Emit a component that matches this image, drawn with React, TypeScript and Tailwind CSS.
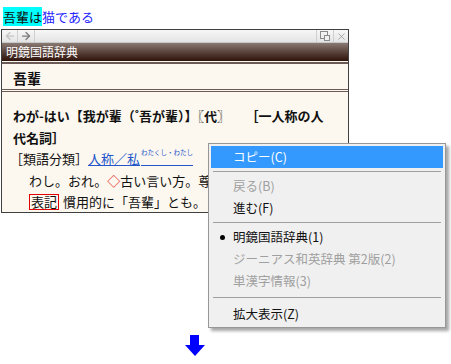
import { ArrowLeft, ArrowRight, X } from "lucide-react";

const font = { fontFamily: '"Noto Sans CJK JP", "Noto Sans", sans-serif' };

const MenuItem = ({ label, active, disabled, bullet }: { label: string; active?: boolean; disabled?: boolean; bullet?: boolean }) => (
    <div
        className={`relative h-[22px] mx-[2px] flex items-center pl-[22px] text-[12.5px] leading-none ${
            active ? "bg-[#3399ff] text-white" : disabled ? "text-[#a0a0a0]" : "text-[#111]"
        }`}
    >
        {bullet && <span className="absolute left-[9px] top-[9px] w-[5px] h-[5px] rounded-full bg-black"></span>}
        {label}
    </div>
);

const Sep = ({ last }: { last?: boolean }) => (
    <div className={`h-px bg-[#a0a0a0] mx-[4px] ${last ? "my-[5px]" : "my-[3px]"}`}></div>
);

const App = () => {
    return (
        <div className="relative w-[451px] h-[364px] bg-white overflow-hidden" style={font}>
            <div className="h-[29px] pt-[8px] pl-[3px] text-[13px] leading-[18px]">
                <span className="bg-[#00ffff] text-[#111]">吾輩は</span>
                <span className="text-[#2222ff]">猫である</span>
            </div>

            {/* popup window */}
            <div className="ml-px w-[348px] h-[184px] border border-[#404040] bg-[#fdf8ef] flex flex-col">
                <div className="h-[15px] flex items-stretch bg-gradient-to-b from-[#f7f7f7] to-[#e4e4e4] border-b border-[#c8c8c8]">
                    <div className="w-[16px] flex items-center justify-center border-r border-[#cfcfcf]">
                        <ArrowLeft size={12} strokeWidth={2.5} className="text-[#c4c4c4]" />
                    </div>
                    <div className="w-[17px] flex items-center justify-center border-r border-[#cfcfcf]">
                        <ArrowRight size={12} strokeWidth={2.5} className="text-[#7a7a7a]" />
                    </div>
                    <div className="flex-1"></div>
                    <div className="w-[17px] flex items-center justify-center border-l border-[#cfcfcf]">
                        <svg width="10" height="10" viewBox="0 0 10 10">
                            <rect x="0.5" y="0.5" width="7" height="7" fill="none" stroke="#8a8a8a" />
                            <rect x="4.5" y="4.5" width="5" height="5" fill="#f0f0f0" stroke="#8a8a8a" />
                        </svg>
                    </div>
                    <div className="w-[15px] flex items-center justify-center border-l border-[#cfcfcf]">
                        <X size={11} strokeWidth={1.5} className="text-[#8a8a8a]" />
                    </div>
                </div>
                <div className="h-[19px] flex items-center pl-[4px] text-[12px] text-white bg-gradient-to-b from-[#8a7a74] via-[#5a443c] to-[#2e130a]">
                    明鏡国語辞典
                </div>
                <div className="h-[2px] bg-[#fdf8ef]"></div>
                <div className="h-[2px] bg-[#6b5a55]"></div>
                <div className="h-[26px] flex items-center pt-[4px] pl-[11px] text-[14px] font-bold text-[#111]">吾輩</div>
                <div className="h-[4px] border-y border-[#6b5a55]"></div>
                <div className="flex-1 pl-[11px] pt-[12px] text-[13px] text-[#111]">
                    <div className="h-[23px] leading-[23px] font-bold">
                        わが-はい【我が輩（˚吾が輩）】〖代〗<span className="ml-[22px]">［一人称の人</span>
                    </div>
                    <div className="h-[21px] leading-[21px] font-bold">代名詞］</div>
                    <div className="h-[22px] leading-[22px] -ml-[3px]">
                        ［類語分類］
                        <span className="text-[#2255cc] underline">
                            人称／私<sup className="text-[6.5px] ml-px align-[6px]">わたくし・わたし</sup>
                        </span>
                    </div>
                    <div className="h-[22px] leading-[22px] pl-[16px]">
                        わし。おれ。<span className="text-[#e02020]">◇</span>古い言い方。尊
                    </div>
                    <div className="h-[20px] pl-[16px] flex items-center">
                        <span className="border border-[#e00000] px-px leading-[14px]">表記</span>
                        <span className="ml-[4px]">慣用的に「吾輩」とも。</span>
                    </div>
                </div>
            </div>

            <div className="mt-[122px] ml-[185px] flex flex-col items-center w-[19px]">
                <div className="w-[9px] h-[10px] bg-[#0000ff]"></div>
                <div className="w-0 h-0 border-l-[10px] border-r-[10px] border-t-[11px] border-l-transparent border-r-transparent border-t-[#0000ff]"></div>
            </div>

            {/* context menu */}
            <div className="absolute left-[208px] top-[143px] w-[238px] bg-[#f0f0f0] border border-[#979797] py-[2px] shadow-[3px_3px_3px_rgba(0,0,0,0.35)]">
                <MenuItem label="コピー(C)" active />
                <Sep />
                <MenuItem label="戻る(B)" disabled />
                <MenuItem label="進む(F)" />
                <Sep />
                <MenuItem label="明鏡国語辞典(1)" bullet />
                <MenuItem label="ジーニアス和英辞典 第2版(2)" disabled />
                <MenuItem label="単漢字情報(3)" disabled />
                <Sep last />
                <MenuItem label="拡大表示(Z)" />
            </div>
        </div>
    );
};

export default App;
